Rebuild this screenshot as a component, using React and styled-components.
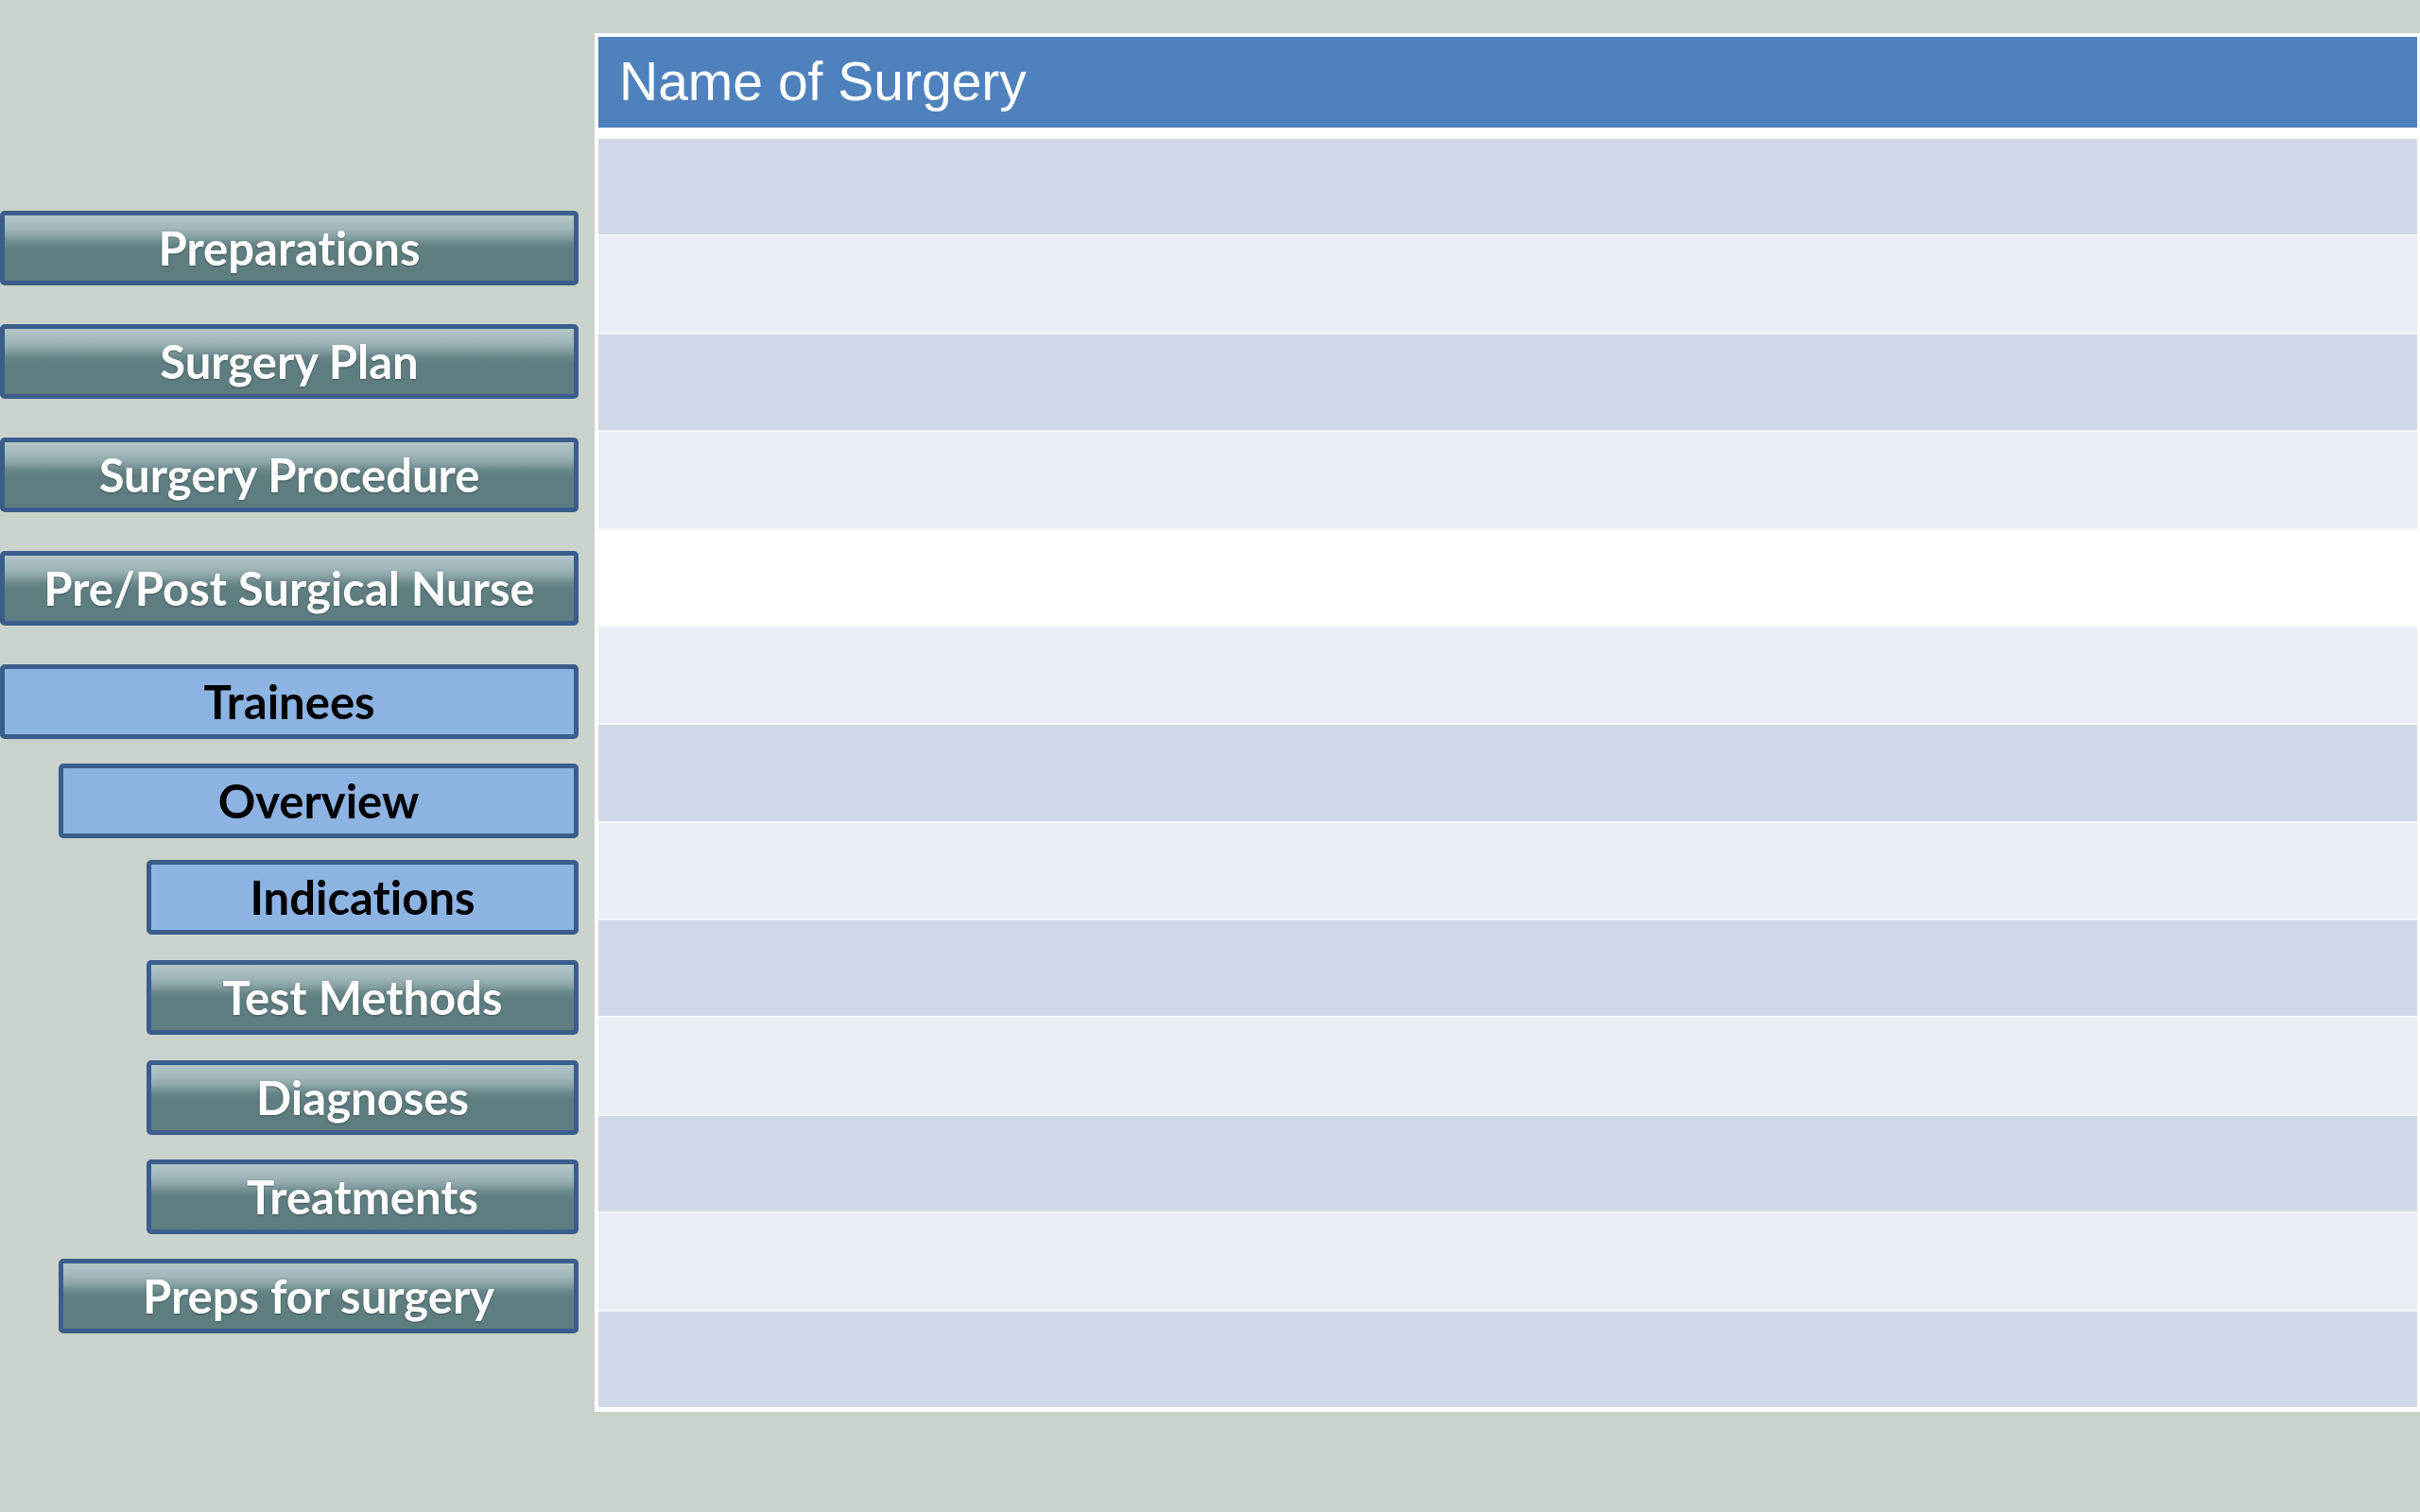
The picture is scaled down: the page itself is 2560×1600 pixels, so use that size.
import React from 'react';
import styled, { createGlobalStyle, css } from 'styled-components';

const GlobalStyle = createGlobalStyle`
  html, body {
    margin: 0;
    padding: 0;
    background: #c9d2cb;
  }
  * {
    box-sizing: border-box;
  }
`;

const Page = styled.div`
  width: 2560px;
  height: 1600px;
  display: flex;
  align-items: flex-start;
  background: #c9d2cb;
  overflow: hidden;
`;

const Nav = styled.nav`
  width: 612px;
  flex-shrink: 0;
  display: flex;
  flex-direction: column;
  align-items: flex-end;
  padding-top: 223px;
`;

const NavButton = styled.div`
  width: ${(props) => props.width}px;
  height: 79px;
  margin-top: ${(props) => props.gap}px;
  border: 5px solid #3a5d8c;
  border-radius: 5px;
  display: flex;
  align-items: center;
  justify-content: center;
  font-family: Lato, 'Open Sans', sans-serif;
  font-weight: 700;
  font-size: 49px;
  font-variant-ligatures: none;
  padding-bottom: 2px;
  cursor: pointer;
  ${(props) =>
    props.active
      ? css`
          background: #8db3e2;
          color: #000;
        `
      : css`
          background: linear-gradient(
            180deg,
            #b2c5c7 0%,
            #a0b6b9 20%,
            #86a0a3 33%,
            #6a888b 42%,
            #5f7e81 52%,
            #5e7d80 100%
          );
          color: #fff;
          text-shadow: 0 1px 2px rgba(0, 0, 0, 0.35);
        `}
`;

const Table = styled.section`
  flex: 1;
  margin-left: 17px;
  margin-top: 35px;
  background: #fff;
  padding: 4px 3px 5px 4px;
  display: flex;
  flex-direction: column;
`;

const Header = styled.div`
  height: 96px;
  background: #4f81bd;
  color: #fff;
  font-family: 'Liberation Sans', Arial, sans-serif;
  font-size: 57px;
  display: flex;
  align-items: center;
  padding-left: 22px;
  padding-bottom: 2px;
`;

const Rows = styled.div`
  margin-top: 12px;
  height: 1342px;
  display: grid;
  grid-template-rows: repeat(13, 1fr);
  row-gap: 2px;
  background: #f4f6fa;
`;

const rowColors = {
  dark: '#d0d8e8',
  light: '#e9edf4',
  blank: '#ffffff',
};

const Row = styled.div`
  background: ${(props) => rowColors[props.tone]};
`;

const navItems = [
  { label: 'Preparations', width: 612, gap: 0 },
  { label: 'Surgery Plan', width: 612, gap: 41 },
  { label: 'Surgery Procedure', width: 612, gap: 41 },
  { label: 'Pre/Post Surgical Nurse', width: 612, gap: 41 },
  { label: 'Trainees', width: 612, gap: 41, active: true },
  { label: 'Overview', width: 550, gap: 26, active: true },
  { label: 'Indications', width: 457, gap: 23, active: true },
  { label: 'Test Methods', width: 457, gap: 27 },
  { label: 'Diagnoses', width: 457, gap: 27 },
  { label: 'Treatments', width: 457, gap: 26 },
  { label: 'Preps for surgery', width: 550, gap: 26 },
];

const rowTones = [
  'dark', 'light', 'dark', 'light', 'blank', 'light', 'dark',
  'light', 'dark', 'light', 'dark', 'light', 'dark',
];

const App = () => {
  return (
    <Page>
      <GlobalStyle />
      <Nav>
        {navItems.map((item) => (
          <NavButton key={item.label} width={item.width} gap={item.gap} active={item.active}>
            {item.label}
          </NavButton>
        ))}
      </Nav>
      <Table>
        <Header>Name of Surgery</Header>
        <Rows>
          {rowTones.map((tone, i) => (
            <Row key={i} tone={tone} />
          ))}
        </Rows>
      </Table>
    </Page>
  );
};

export default App;
